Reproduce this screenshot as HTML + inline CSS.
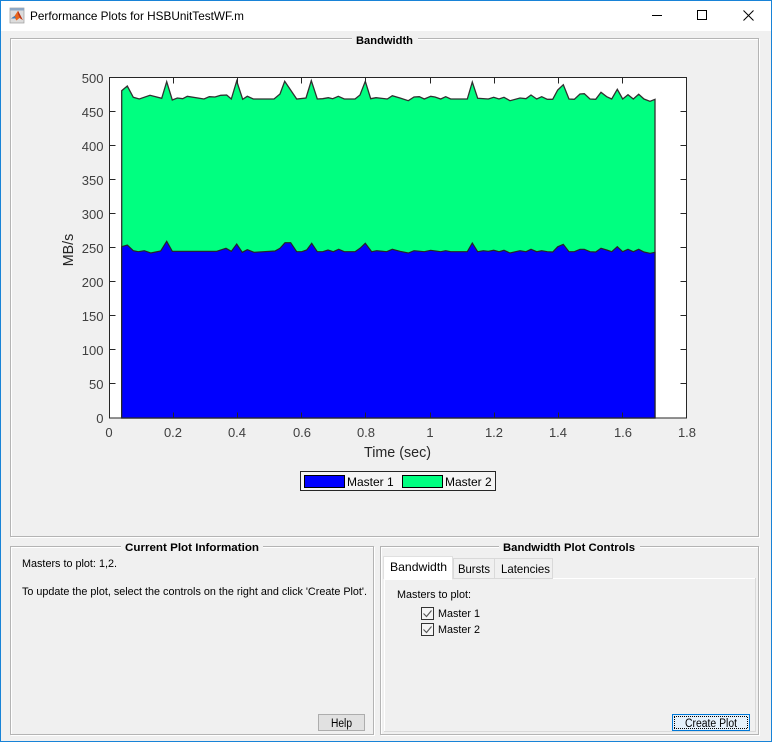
<!DOCTYPE html>
<html><head><meta charset="utf-8"><style>
html,body{margin:0;padding:0;width:772px;height:742px;overflow:hidden;background:#f0f0f0}
svg{display:block}
text{font-family:"Liberation Sans",sans-serif}
</style></head><body>
<svg width="772" height="742" viewBox="0 0 772 742" xmlns="http://www.w3.org/2000/svg">
<rect width="772" height="742" fill="#f0f0f0"/>
<rect x="0" y="0" width="772" height="31" fill="#fff"/>
<rect x="0.5" y="0.5" width="771" height="741" fill="none" stroke="#1883d7"/>
<!-- title icon -->
<rect x="10" y="8" width="14" height="15" fill="#dcdcdc" stroke="#9a9a9a" stroke-width="0.7"/>
<rect x="10" y="8" width="14" height="2.5" fill="#8fa8c4"/>
<path d="M11 18.5L14.5 16 18 10.8 22.8 20 19.5 18 16.5 20.5 14.5 17.5Z" fill="#e8641b"/>
<path d="M11 18.5L14.5 16 16 18 14.5 18.5Z" fill="#3f7fbf"/>
<path d="M18 10.8L22.8 20 20 18 18 14Z" fill="#b8341a"/>
<text x="30" y="20" font-size="12" fill="#000" textLength="214" lengthAdjust="spacingAndGlyphs">Performance Plots for HSBUnitTestWF.m</text>
<!-- window controls -->
<rect x="652" y="15" width="10" height="1" fill="#000"/>
<rect x="697.5" y="10.5" width="9" height="9" fill="none" stroke="#000"/>
<path d="M743.5 10.5L753.5 20.5M753.5 10.5L743.5 20.5" stroke="#000" stroke-width="1" fill="none"/>
<!-- main panel -->
<rect x="11.5" y="39.5" width="748" height="498" fill="none" stroke="#fff"/>
<rect x="10.5" y="38.5" width="748" height="498" fill="none" stroke="#b4b4b4"/>
<rect x="352" y="34" width="66" height="10" fill="#f0f0f0"/>
<text x="384.5" y="44" font-size="11" font-weight="bold" text-anchor="middle" fill="#000" textLength="57" lengthAdjust="spacingAndGlyphs">Bandwidth</text>
<!-- axes -->
<rect x="109.5" y="77.5" width="577" height="340.5" fill="#fff"/>
<path d="M121.7 418V90.7L127.3 86 133.3 97.3 139.3 99 150 95.3 161.7 98.3 166.7 81.7 172.3 100 177.3 98 182.7 98.7 187.3 96.3 204 99 209.3 96.7 215 97 220.7 95.3 226.7 95 231.3 99 236.7 81 242.7 99.3 247.3 96.3 253.3 99 274 99 280 94 284.7 81.3 296.7 99 306 98 311.3 80.7 317.3 99 322.7 98.7 328.3 97.7 332.7 98.7 338.3 96.3 344.3 99 355 99 360 95 365.3 81.3 370.7 98.7 376 97.7 387.3 99 392.3 95.7 400 98 408.3 100.7 414 97 419.3 96.7 424.3 99 430.7 96.3 435 97 440.7 99 445.7 96.7 450.7 99 467.3 99 472.3 82 477.7 98.3 488.3 99 493.7 97.3 499 99 504 97.3 510 100.7 520 98 526 98.7 531 95 536.7 99 541.7 96.7 547.3 99.3 552.7 99.3 557.7 90 563.3 84.7 569 99 574.3 99.3 580 94 584.3 93.7 590 99 595.7 99.3 601 92.3 606.7 96.7 611.7 99 617.3 89.3 622.7 99 628 94.7 633.3 99 638.7 94.3 644 99 650 101.3 655 99.3V418Z" fill="#00ff80" stroke="#303030" stroke-width="1.3"/>
<path d="M121.7 418V246.7L127.3 245 133.3 250.7 138.3 251.7 144.3 250.7 150.7 253 160.7 251 166.7 241.3 172.3 251.3 216.7 251.3 226 248.3 231.3 251.3 236.7 244 242.3 252.3 247.3 249.7 254 252.3 275 251 280 248.3 285 242.7 290.7 242.7 296.7 251.7 301.7 251.7 306.7 250 311.7 243.3 317.3 251.7 322.7 251.7 328 250 333.3 251.7 338.7 249.3 344.3 251.7 355 251.7 360 248.3 365.3 243.3 371.7 251.7 376.7 250.7 386.7 251.7 392.3 249.3 400 251.3 408.3 253 414 250.7 424.3 251.7 430.7 250.3 440.7 251.7 445.7 250.7 450.7 251.7 467.3 251.7 472.3 243 477.7 251.7 483.3 250.7 488.3 251.3 493.7 250.3 499 251.7 504 250.3 510 253 520 250.7 526 251.7 531 249.3 536.7 251.7 541.7 250.7 547.3 251.7 552.7 252 557.7 246.7 563.3 244.3 569 251.7 574.3 251.7 580 249.3 584.3 249.3 590 251.7 595.7 252 601 248.3 606.7 250 611.7 251.7 617.3 246.7 622.7 251.7 628 249.3 633.3 251.7 638.7 249.3 644 252 650 253.3 655 252.3V418Z" fill="#0000ff" stroke="#262626" stroke-width="1.2"/>
<!-- ticks & box -->
<g stroke="#262626" stroke-width="1" fill="none">
<path d="M173.5 78v5.5M237.5 78v5.5M301.5 78v5.5M365.5 78v5.5M430.5 78v5.5M494.5 78v5.5M558.5 78v5.5M622.5 78v5.5"/>
<path d="M173.5 418v-5.5M237.5 418v-5.5M301.5 418v-5.5M365.5 418v-5.5M430.5 418v-5.5M494.5 418v-5.5M558.5 418v-5.5M622.5 418v-5.5"/>
<path d="M110 111.5h5.5M110 145.5h5.5M110 179.5h5.5M110 213.5h5.5M110 247.5h5.5M110 281.5h5.5M110 315.5h5.5M110 349.5h5.5M110 383.5h5.5"/>
<path d="M686 111.5h-5.5M686 145.5h-5.5M686 179.5h-5.5M686 213.5h-5.5M686 247.5h-5.5M686 281.5h-5.5M686 315.5h-5.5M686 349.5h-5.5M686 383.5h-5.5"/>
<rect x="109.5" y="77.5" width="577" height="340.5"/>
</g>
<g font-size="13" fill="#404040" text-anchor="end">
<text x="103.5" y="83">500</text><text x="103.5" y="117">450</text><text x="103.5" y="151">400</text><text x="103.5" y="185">350</text><text x="103.5" y="219">300</text><text x="103.5" y="253">250</text><text x="103.5" y="287">200</text><text x="103.5" y="321">150</text><text x="103.5" y="355">100</text><text x="103.5" y="389">50</text><text x="103.5" y="423">0</text>
</g>
<g font-size="13" fill="#404040" text-anchor="middle">
<text x="109" y="437">0</text><text x="173" y="437">0.2</text><text x="237" y="437">0.4</text><text x="302" y="437">0.6</text><text x="366" y="437">0.8</text><text x="430" y="437">1</text><text x="494" y="437">1.2</text><text x="558" y="437">1.4</text><text x="623" y="437">1.6</text><text x="687" y="437">1.8</text>
</g>
<text x="397.5" y="457" font-size="14.3" fill="#262626" text-anchor="middle">Time (sec)</text>
<text transform="translate(73,250) rotate(-90)" font-size="14.3" fill="#262626" text-anchor="middle">MB/s</text>
<!-- legend -->
<rect x="300.5" y="471.5" width="195" height="19" fill="#f4f4f4" stroke="#262626"/>
<rect x="304.5" y="475.5" width="40" height="12" fill="#0000ff" stroke="#000"/>
<text x="347" y="486" font-size="12" fill="#000">Master 1</text>
<rect x="402.5" y="475.5" width="40" height="12" fill="#00ff80" stroke="#000"/>
<text x="445" y="486" font-size="12" fill="#000">Master 2</text>
<!-- left bottom panel -->
<rect x="11.5" y="547.5" width="363" height="188" fill="none" stroke="#fff"/>
<rect x="10.5" y="546.5" width="363" height="188" fill="none" stroke="#b4b4b4"/>
<rect x="121" y="541" width="142" height="10" fill="#f0f0f0"/>
<text x="125" y="551" font-size="11" font-weight="bold" fill="#000" textLength="134" lengthAdjust="spacingAndGlyphs">Current Plot Information</text>
<text x="22" y="567" font-size="11" fill="#000" textLength="95" lengthAdjust="spacingAndGlyphs">Masters to plot: 1,2.</text>
<text x="22" y="595" font-size="11" fill="#000" textLength="345" lengthAdjust="spacingAndGlyphs">To update the plot, select the controls on the right and click 'Create Plot'.</text>
<rect x="318.5" y="714.5" width="46" height="16" fill="#e1e1e1" stroke="#adadad"/>
<text x="331" y="727" font-size="11.5" fill="#000" textLength="21" lengthAdjust="spacingAndGlyphs">Help</text>
<!-- right bottom panel -->
<rect x="381.5" y="547.5" width="378" height="188" fill="none" stroke="#fff"/>
<rect x="380.5" y="546.5" width="378" height="188" fill="none" stroke="#b4b4b4"/>
<rect x="499" y="541" width="141" height="10" fill="#f0f0f0"/>
<text x="503" y="551" font-size="11" font-weight="bold" fill="#000" textLength="132" lengthAdjust="spacingAndGlyphs">Bandwidth Plot Controls</text>
<!-- tab panel -->
<rect x="384.5" y="578.5" width="371" height="153" fill="#f0f0f0" stroke="#d9d9d9"/>
<path d="M385 578.5H755M384.5 579V731" stroke="#fff" fill="none"/>
<rect x="453.5" y="558.5" width="41" height="20" fill="#f0f0f0" stroke="#d9d9d9"/>
<rect x="494.5" y="558.5" width="58" height="20" fill="#f0f0f0" stroke="#d9d9d9"/>
<rect x="383.5" y="556.5" width="69" height="22" fill="#fff" stroke="#e0e0e0"/>
<rect x="384" y="577" width="68" height="3" fill="#fff"/>
<text x="390" y="571" font-size="12" fill="#000" textLength="57" lengthAdjust="spacingAndGlyphs">Bandwidth</text>
<text x="458" y="573" font-size="12" fill="#000" textLength="32" lengthAdjust="spacingAndGlyphs">Bursts</text>
<text x="501" y="573" font-size="12" fill="#000" textLength="49" lengthAdjust="spacingAndGlyphs">Latencies</text>
<text x="397" y="598" font-size="11" fill="#000" textLength="74" lengthAdjust="spacingAndGlyphs">Masters to plot:</text>
<rect x="421.5" y="607.5" width="12" height="12" fill="#f4f4f4" stroke="#333"/>
<path d="M423.5 613.5L426.5 616.5 431.5 610.5" fill="none" stroke="#555" stroke-width="1.1"/>
<text x="438" y="617" font-size="11" fill="#000" textLength="42" lengthAdjust="spacingAndGlyphs">Master 1</text>
<rect x="421.5" y="623.5" width="12" height="12" fill="#f4f4f4" stroke="#333"/>
<path d="M423.5 629.5L426.5 632.5 431.5 626.5" fill="none" stroke="#555" stroke-width="1.1"/>
<text x="438" y="633" font-size="11" fill="#000" textLength="42" lengthAdjust="spacingAndGlyphs">Master 2</text>
<!-- create plot -->
<rect x="672.5" y="714.5" width="77" height="16" fill="#e5f1fb" stroke="#0078d7"/>
<path d="M674 716.5H748M674 728.5H748M674.5 717V728M747.5 717V728" fill="none" stroke="#000" stroke-dasharray="1 1"/>
<text x="685" y="727" font-size="11.5" fill="#000" textLength="52" lengthAdjust="spacingAndGlyphs">Create Plot</text>
</svg>
</body></html>
